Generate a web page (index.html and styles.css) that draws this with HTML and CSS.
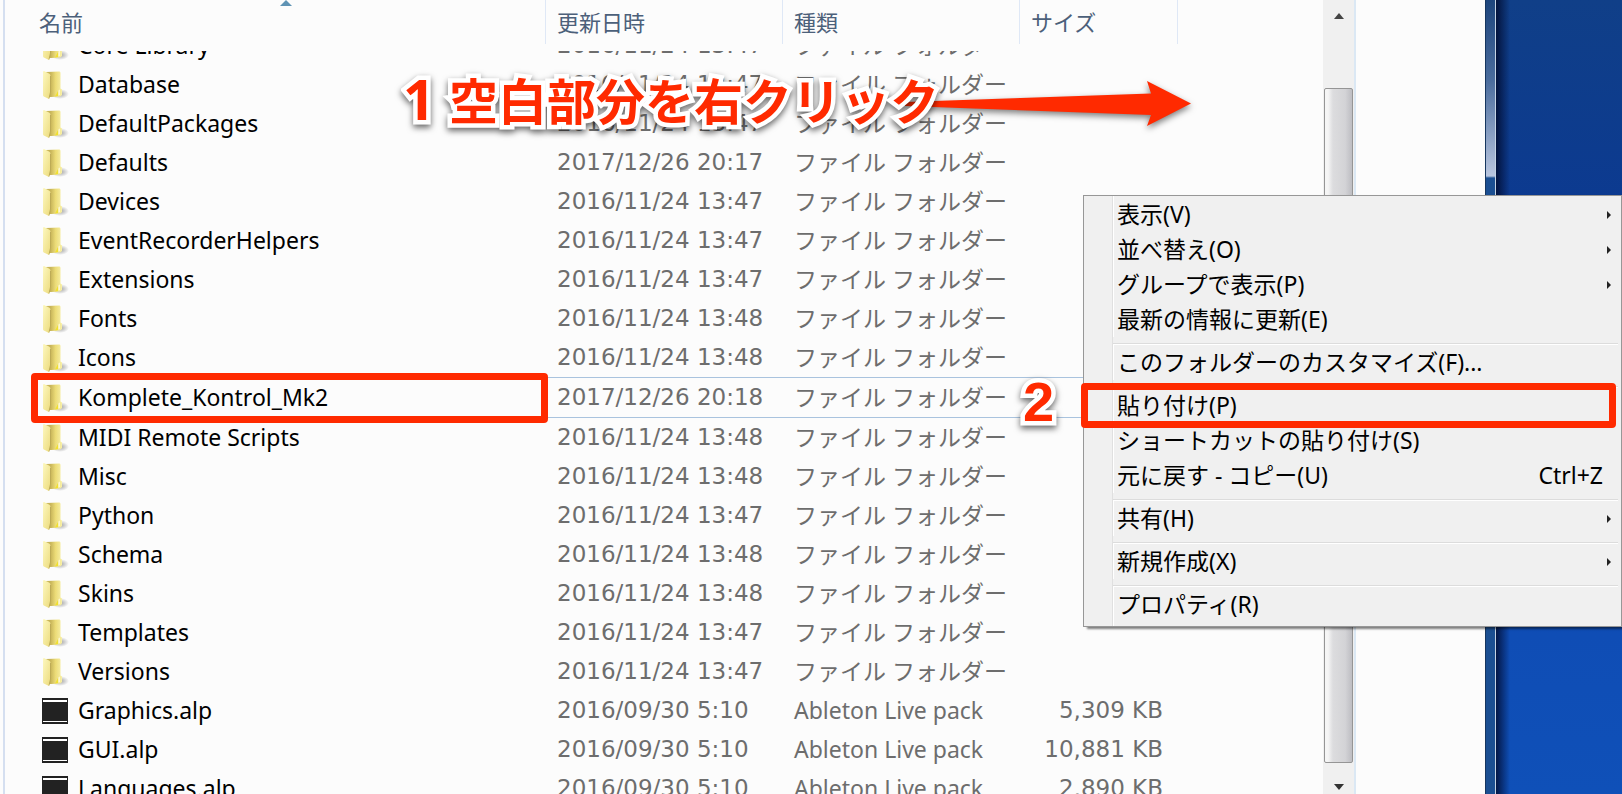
FILE: index.html
```html
<!DOCTYPE html>
<html lang="ja">
<head>
    <meta charset="UTF-8">
    <meta name="viewport" content="width=device-width, initial-scale=1.0">
    <title>Explorer</title>
    <link rel="stylesheet" href="styles.css">
</head>
<body>
    <svg class="defs" aria-hidden="true">
        <defs>
            <linearGradient id="flap" x1="0" y1="0" x2="1" y2="1">
                <stop offset="0" stop-color="#fdf8c0"/>
                <stop offset="1" stop-color="#ecdb7c"/>
            </linearGradient>
            <linearGradient id="back" x1="0" y1="0" x2="1" y2="0">
                <stop offset="0.3" stop-color="#c9b65a"/>
                <stop offset="0.6" stop-color="#ecdc78"/>
                <stop offset="1" stop-color="#f8f0a8"/>
            </linearGradient>
            <radialGradient id="shade">
                <stop offset="0" stop-color="#8a8a8a" stop-opacity="0.8"/>
                <stop offset="1" stop-color="#8a8a8a" stop-opacity="0"/>
            </radialGradient>
        </defs>
        <symbol id="folder" viewBox="0 0 27 30">
            <ellipse cx="18" cy="24" rx="9" ry="5" fill="url(#shade)"/>
            <path d="M4 2 L17.500 1.500 Q18.500 1.500 18.500 3 V18.500 L20 19.500 V25 L18 26.500 L9 27 H5 Z" fill="url(#back)"/>
            <path d="M16.500 20.500 L17.800 19.500 V25 L16.500 25.500 Z" fill="#fffce0"/>
            <path d="M16 21 V26 L13 26.500 Z" fill="#f0e030"/>
            <path d="M1 2 Q1 1 2 1 L7 3.500 Q8.500 4.200 8.500 6 V22 L7 29 L1.800 26.500 Q1 26 1 25 Z" fill="url(#flap)"/>
            <path d="M8.500 6 V22 L7 28.500" fill="none" stroke="#b5a24e" stroke-width="0.800"/>
        </symbol>
        <symbol id="pack" viewBox="0 0 27 30">
            <rect x="0" y="2" width="26" height="26" fill="#222"/>
            <rect x="1" y="4" width="24" height="2" fill="#fff"/>
            <rect x="1" y="25" width="24" height="1" fill="#fff"/>
        </symbol>
    </svg>

    <div class="desktop">
        <main class="window">
            <table class="files">
                <thead>
                    <tr>
                        <th class="sorted">名前</th>
                        <th>更新日時</th>
                        <th>種類</th>
                        <th>サイズ</th>
                    </tr>
                </thead>
                <tbody id="rows"></tbody>
            </table>
            <div class="scrollbar">
                <span class="arrow up"></span>
                <div class="thumb"></div>
                <span class="arrow down"></span>
            </div>
            <div class="preview"></div>
            <div class="frame"></div>
        </main>
        <div class="wallpaper"></div>

        <svg class="pointer" width="300" height="60" viewBox="0 0 300 60" aria-hidden="true">
            <path d="M5 28 L251 19.500 L247 7 L291 29.500 L247 52 L251 41 L5 32 Z" fill="#ff2a00"/>
        </svg>
        <p class="note step-one"><span class="digit">1</span>空白部分を右クリック</p>
        <p class="note step-two">2</p>

        <menu class="context-menu">
            <li><button class="has-sub">表示(V)</button></li>
            <li><button class="has-sub">並べ替え(O)</button></li>
            <li><button class="has-sub">グループで表示(P)</button></li>
            <li><button>最新の情報に更新(E)</button></li>
            <li class="separator"></li>
            <li><button>このフォルダーのカスタマイズ(F)...</button></li>
            <li class="separator"></li>
            <li class="marked"><button>貼り付け(P)</button></li>
            <li><button>ショートカットの貼り付け(S)</button></li>
            <li><button>元に戻す - コピー(U)<kbd>Ctrl+Z</kbd></button></li>
            <li class="separator"></li>
            <li><button class="has-sub">共有(H)</button></li>
            <li class="separator"></li>
            <li><button class="has-sub">新規作成(X)</button></li>
            <li class="separator"></li>
            <li><button>プロパティ(R)</button></li>
        </menu>
    </div>

    <script src="files.js"></script>
</body>
</html>
```
FILE: files.js
```js
const files = [
    ["Core Library", "2016/11/24 13:47"],
    ["Database", "2016/11/24 13:47"],
    ["DefaultPackages", "2016/11/24 13:47"],
    ["Defaults", "2017/12/26 20:17"],
    ["Devices", "2016/11/24 13:47"],
    ["EventRecorderHelpers", "2016/11/24 13:47"],
    ["Extensions", "2016/11/24 13:47"],
    ["Fonts", "2016/11/24 13:48"],
    ["Icons", "2016/11/24 13:48"],
    ["Komplete_Kontrol_Mk2", "2017/12/26 20:18"],
    ["MIDI Remote Scripts", "2016/11/24 13:48"],
    ["Misc", "2016/11/24 13:48"],
    ["Python", "2016/11/24 13:47"],
    ["Schema", "2016/11/24 13:48"],
    ["Skins", "2016/11/24 13:48"],
    ["Templates", "2016/11/24 13:47"],
    ["Versions", "2016/11/24 13:47"],
    ["Graphics.alp", "2016/09/30 5:10", "5,309 KB"],
    ["GUI.alp", "2016/09/30 5:10", "10,881 KB"],
    ["Languages.alp", "2016/09/30 5:10", "2,890 KB"],
];

const rows = document.getElementById("rows");

files.forEach(([name, date, size]) => {
    const row = document.createElement("tr");
    const icon = size ? "pack" : "folder";
    const type = size ? "Ableton Live pack" : "ファイル フォルダー";
    if (name === "Komplete_Kontrol_Mk2") row.className = "selected";
    row.innerHTML = `
        <td class="name"><svg class="icon"><use href="#${icon}"/></svg>${name}</td>
        <td class="date">${date}</td>
        <td class="type">${type}</td>
        <td class="size">${size || ""}</td>`;
    rows.appendChild(row);
});
```
FILE: styles.css
```css
:root {
    --mark: #ff2a00;
    --pane: #fcfcfc;
    --line: #dfe8f6;
    --menu: #f0f0f0;
    --columns: 541px 237px 237px 158px;
}

* {
    margin: 0;
    padding: 0;
    box-sizing: border-box;
}

body {
    font-family: "Noto Sans", "Noto Sans CJK JP", sans-serif;
    font-size: 23px;
    color: #000;
    overflow: hidden;
}

.defs {
    position: absolute;
    width: 0;
    height: 0;
}

.desktop {
    position: relative;
    display: flex;
    height: 100vh;
    overflow: hidden;
}

.window {
    flex: 1;
    display: flex;
    min-width: 0;
    background: var(--pane);
    padding-left: 3px;
}

.wallpaper {
    width: 126px;
    background:
        linear-gradient(to right, rgba(0, 8, 40, 0.8), rgba(0, 8, 40, 0) 14px),
        linear-gradient(to bottom, #103f88, #0c3a90 25%, #0f4db5 80%, #0f50b8);
}

/* file list */

.files {
    flex: 1;
    display: flex;
    flex-direction: column;
    min-width: 0;
    border-left: 2px solid #d5dff0;
}

.files tr {
    display: grid;
    grid-template-columns: var(--columns);
}

.files th {
    height: 44px;
    padding-left: 11px;
    border-right: 1px solid var(--line);
    font-size: 22px;
    font-weight: 400;
    line-height: 44px;
    text-align: left;
    color: #4c607a;
}

.files thead {
    display: block;
    height: 51px;
}

.files th.sorted {
    position: relative;
    padding-left: 34px;
}

.sorted::after {
    content: "";
    position: absolute;
    top: 0;
    left: 51%;
    border: 6px solid transparent;
    border-top: 0;
    border-bottom-color: #5f93b4;
}

.files tbody {
    flex: 1;
    display: block;
    min-height: 0;
    overflow: hidden;
}

/* the list is scrolled, so the first row is cut by the header */
.files tbody tr:first-child {
    margin-top: -25px;
}

.files td {
    height: 39px;
    padding-left: 11px;
    line-height: 39px;
    white-space: nowrap;
    color: #6d6d6d;
}

.files td.name {
    position: relative;
    display: flex;
    align-items: center;
    gap: 9px;
    padding-left: 37px;
    color: #000;
}

.icon {
    width: 27px;
    height: 30px;
}

.files td.date,
.files td.size {
    font-family: "DejaVu Sans", sans-serif;
}

.files td.size {
    padding-right: 15px;
    text-align: right;
}

.files .selected {
    position: relative;
    padding: 1px 0;
}

.selected::after {
    content: "";
    position: absolute;
    inset: 0 0 0 40px;
    border: solid #a9c3de;
    border-width: 1px 0;
}

.selected .name::after,
.marked::after {
    content: "";
    position: absolute;
    z-index: 1;
    border: 7px solid var(--mark);
    border-radius: 4px;
    pointer-events: none;
}

.selected .name::after {
    inset: -5px -2px -6px 26px;
}

/* scrollbar and window edge */

.scrollbar {
    display: flex;
    flex-direction: column;
    align-items: center;
    width: 31px;
    padding: 13px 0 4px;
    background: #f0f0f0;
}

.thumb {
    flex: 1;
    width: 29px;
    margin: 69px 0 21px;
    border: 1px solid #959595;
    border-radius: 2px;
    background: linear-gradient(to right, #f5f5f5 3px, #dcdcde 8px, #d3d3d6 75%, #bdbdc2);
}

.arrow {
    border: 5px solid transparent;
}

.arrow.up {
    border-top: 0;
    border-bottom: 6px solid #444;
}

.arrow.down {
    border-bottom: 0;
    border-top: 6px solid #333;
}

.preview {
    width: 131px;
    border-left: 2px solid #dbe8f4;
}

.frame {
    width: 11px;
    border-left: 1px solid #16365f;
    box-shadow: inset -1px 0 #c4d3e4;
    background: linear-gradient(to bottom, #1d457d, #4a6c9d 80px, #b9c6df 176px, #1b4f92 178px);
}

/* context menu */

.context-menu {
    position: absolute;
    top: 195px;
    right: 0;
    width: 539px;
    padding: 1px 3px 4px 29px;
    border: 1px solid #979797;
    background: linear-gradient(to right, var(--menu) 28px, #e0e0e0 28px, #e0e0e0 29px, #fff 29px, #fff 30px, var(--menu) 30px);
    box-shadow: 4px 2px 2px rgba(0, 0, 0, 0.5);
    list-style: none;
}

.context-menu button {
    display: flex;
    justify-content: space-between;
    width: 100%;
    height: 35px;
    padding: 0 15px 0 4px;
    border: 0;
    background: none;
    font: inherit;
    line-height: 35px;
    text-align: left;
    color: #000;
}

.context-menu kbd {
    font: inherit;
}

.has-sub::after {
    content: "";
    align-self: center;
    margin-right: -8px;
    border: 4px solid transparent;
    border-left-color: #222;
    border-right: 0;
}

.separator {
    height: 8px;
    border-top: 6px solid var(--menu);
    background: linear-gradient(to bottom, #dcdcdc 1px, #fff 1px);
}

.marked {
    position: relative;
}

.marked::after {
    inset: -5px 2px -5px -32px;
}

/* hand-drawn style notes over the window */

.note {
    position: absolute;
    font-family: "Noto Sans CJK JP", sans-serif;
    font-size: 49px;
    font-weight: 700;
    line-height: 60px;
    white-space: nowrap;
    color: var(--mark);
    -webkit-text-stroke: 9px #fff;
    paint-order: stroke fill;
    filter: drop-shadow(0 3px 3px rgba(0, 0, 0, 0.6));
}

.step-one {
    top: 68px;
    left: 403px;
}

.step-one .digit {
    margin-right: 14px;
    font-family: "Noto Sans", sans-serif;
    font-size: 56px;
}

.step-two {
    top: 372px;
    left: 1023px;
    font-family: "Liberation Sans", sans-serif;
    font-size: 56px;
}

.pointer {
    position: absolute;
    top: 74px;
    left: 900px;
    filter: drop-shadow(0 3px 3px rgba(0, 0, 0, 0.5));
}
```
